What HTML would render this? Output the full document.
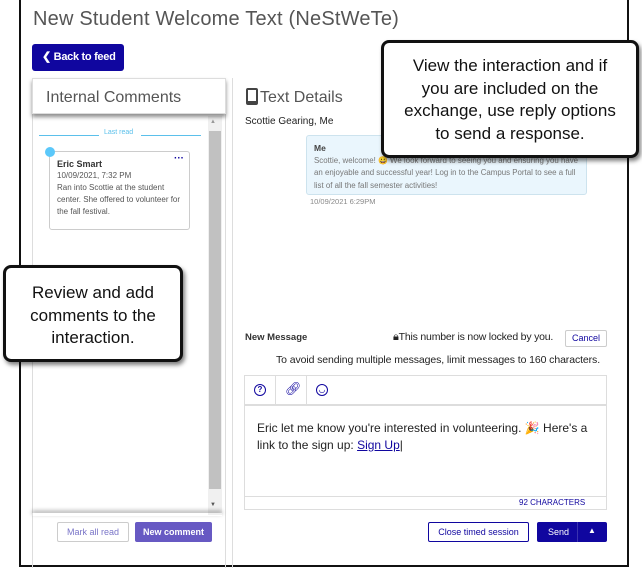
<!DOCTYPE html>
<html><head><style>
*{box-sizing:border-box;margin:0;padding:0}
body{width:642px;height:568px;background:#fff;font-family:"Liberation Sans",Arial,sans-serif;position:relative;overflow:hidden}
.a{position:absolute;white-space:nowrap}
.frame{left:19px;top:-2px;width:610px;height:569px;border:2px solid #111;background:#fff}
.title{left:33px;top:8px;font-size:20px;color:#555;letter-spacing:.2px}
.back{left:32px;top:44px;width:92px;height:27px;background:#10069f;border-radius:3px;color:#fff;font-size:11px;font-weight:bold;line-height:27px;padding-left:10px;letter-spacing:-.3px}
.lp{left:32px;top:78px;width:194px;height:490px;border:1px solid #ddd;border-bottom:none}
.lh{left:32px;top:78px;width:194px;height:36px;border:1px solid #ddd;background:#fff;box-shadow:0 3px 4px rgba(0,0,0,.45);font-size:16px;color:#555;padding:10px 0 0 13px}
.sb{left:208px;top:116px;width:14px;height:399px;background:#f0f0f0}
.th{left:209px;top:131px;width:12px;height:358px;background:#c1c1c1}
.card{left:49px;top:151px;width:141px;height:79px;border:1px solid #ccc;border-radius:3px;font-size:8px;color:#555;padding:6px 7px;line-height:12px;white-space:normal}
.rp{left:232px;top:78px;width:1px;height:490px;background:#ddd}
.bub{left:306px;top:135px;width:281px;height:60px;background:#eaf6fd;border:1px solid #cde3ee;border-radius:3px;font-size:7.9px;color:#777;padding:6px 7px;line-height:12.5px;white-space:normal}
.call{background:#fff;border:3px solid #111;border-radius:8px;box-shadow:2px 3px 4px rgba(0,0,0,.5);text-align:center;font-size:17px;line-height:22.5px;color:#111;white-space:normal}
.ed{left:244px;top:375px;width:363px;height:135px;border:1px solid #ddd}
.btn{font-size:9px;text-align:center;border-radius:2px}
</style></head><body>
<div class="a frame"></div>
<div class="a title">New Student Welcome Text (NeStWeTe)</div>
<div class="a back">&#10094; Back to feed</div>
<div class="a lp"></div>
<div class="a sb"></div><div class="a th"></div>
<div class="a" style="left:210px;top:119px;font-size:6px;color:#999">▲</div>
<div class="a" style="left:210px;top:502px;font-size:6px;color:#555">▼</div>
<div class="a" style="left:39px;top:135px;width:60px;height:1px;background:#5bc0eb"></div>
<div class="a" style="left:141px;top:135px;width:60px;height:1px;background:#5bc0eb"></div>
<div class="a" style="left:104px;top:129px;font-size:7px;color:#5bc0eb">Last read</div>
<div class="a card"><div style="font-weight:bold;color:#333;font-size:9px">Eric Smart</div><div style="color:#555">10/09/2021, 7:32 PM</div>Ran into Scottie at the student center. She offered to volunteer for the fall festival.</div>
<div class="a" style="left:174px;top:156px;color:#10069f;font-weight:bold;font-size:10px;line-height:6px">···</div>
<div class="a" style="left:45px;top:147px;width:10px;height:10px;border-radius:50%;background:#5bc8fa"></div>
<div class="a lh">Internal Comments</div>
<div class="a" style="left:32px;top:513px;width:190px;height:3px;box-shadow:0 -2px 4px rgba(0,0,0,.4)"></div>
<div class="a btn" style="left:57px;top:522px;width:72px;height:20px;border:1px solid #ccc;color:#7a75c8;line-height:18px">Mark all read</div>
<div class="a btn" style="left:135px;top:522px;width:77px;height:20px;background:#6759c3;color:#fff;font-weight:bold;line-height:20px">New comment</div>
<div class="a rp"></div>
<div class="a" style="left:246px;top:88px;width:12px;height:17px;border:2px solid #444;border-radius:2px;border-bottom-width:4px"></div>
<div class="a" style="left:260px;top:89px;font-size:16px;color:#555">Text Details</div>
<div class="a" style="left:245px;top:116px;font-size:10px;color:#222">Scottie Gearing, Me</div>
<div class="a bub"><div style="font-size:8.5px;color:#444;font-weight:bold">Me</div>Scottie, welcome! 😀 We look forward to seeing you and ensuring you have an enjoyable and successful year! Log in to the Campus Portal to see a full list of all the fall semester activities!</div>
<div class="a" style="left:310px;top:197px;font-size:7.5px;color:#888">10/09/2021 6:29PM</div>
<div class="a" style="left:245px;top:332px;font-size:9.5px;font-weight:bold;color:#333">New Message</div>
<div class="a" style="left:393px;top:331px;font-size:10.5px;color:#222;letter-spacing:-.2px"><span style="font-size:11px">&#x1F512;&#xFE0E;</span>This number is now locked by you.</div>
<div class="a btn" style="left:565px;top:330px;width:42px;height:17px;border:1px solid #ccc;color:#10069f;line-height:15px">Cancel</div>
<div class="a" style="left:276px;top:354px;font-size:10.5px;color:#222;letter-spacing:-.1px">To avoid sending multiple messages, limit messages to 160 characters.</div>
<div class="a ed"></div>
<div class="a" style="left:244px;top:404px;width:363px;height:2px;background:#ddd"></div>
<div class="a" style="left:275px;top:376px;width:1px;height:28px;background:#ddd"></div>
<div class="a" style="left:306px;top:376px;width:1px;height:28px;background:#ddd"></div>
<div class="a" style="left:254px;top:384px;width:12px;height:12px;border:1.5px solid #10069f;border-radius:50%;font-size:8px;font-weight:bold;color:#10069f;text-align:center;line-height:9px">?</div>
<div class="a" style="left:285px;top:381px;font-size:13px;color:#10069f">🔗︎</div>
<div class="a" style="left:316px;top:384px;width:12px;height:12px;border:1.5px solid #10069f;border-radius:50%;font-size:8px;color:#10069f;text-align:center;line-height:9px">◡</div>
<div class="a" style="left:257px;top:420px;width:340px;font-size:12px;color:#222;line-height:17px;white-space:normal">Eric let me know you're interested in volunteering. 🎉 Here's a link to the sign up: <span style="color:#10069f;text-decoration:underline">Sign Up</span>|</div>
<div class="a" style="left:244px;top:496px;width:363px;height:1px;background:#ddd"></div>
<div class="a" style="left:519px;top:498px;font-size:8px;color:#10069f">92 CHARACTERS</div>
<div class="a btn" style="left:428px;top:522px;width:101px;height:20px;border:1px solid #10069f;color:#10069f;line-height:18px">Close timed session</div>
<div class="a btn" style="left:537px;top:522px;width:70px;height:20px;background:#10069f;color:#fff;line-height:20px;text-align:left;padding-left:11px">Send<span style="position:absolute;left:40px;top:0;width:1px;height:20px;background:#3a32b0"></span><span style="position:absolute;left:51px;top:-1px;font-size:8px">▲</span></div>
<div class="a call" style="left:381px;top:40px;width:258px;height:118px;padding:12px 14px 0">View the interaction and if you are included on the exchange, use reply options to send a response.</div>
<div class="a call" style="left:3px;top:265px;width:180px;height:97px;padding:14px 18px 0">Review and add comments to the interaction.</div>
</body></html>
